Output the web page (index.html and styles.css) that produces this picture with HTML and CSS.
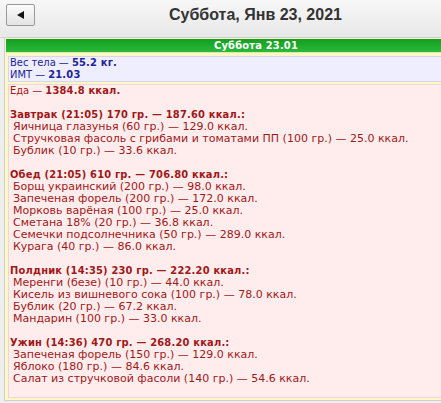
FILE: index.html
```html
<!DOCTYPE html>
<html>
<head>
<meta charset="utf-8">
<link rel="stylesheet" href="styles.css">
</head>
<body>
<div class="page">
  <div class="header">
    <button class="back"><span class="tri"></span></button>
    <h1 class="title">Суббота, Янв 23, 2021</h1>
  </div>
  <div class="box">
    <div class="dayhead">Суббота 23.01</div>
    <div class="weight">
      <div>Вес тела — <b>55.2 кг.</b></div>
      <div>ИМТ — <b>21.03</b></div>
    </div>
    <div class="food">
      <div class="total">Еда — <b>1384.8 ккал.</b></div>
      <div class="blank"></div>
      <div class="meal">Завтрак (21:05) 170 гр. — 187.60 ккал.:</div>
      <div class="item">Яичница глазунья (60 гр.) — 129.0 ккал.</div>
      <div class="item">Стручковая фасоль с грибами и томатами ПП (100 гр.) — 25.0 ккал.</div>
      <div class="item">Бублик (10 гр.) — 33.6 ккал.</div>
      <div class="blank"></div>
      <div class="meal">Обед (21:05) 610 гр. — 706.80 ккал.:</div>
      <div class="item">Борщ украинский (200 гр.) — 98.0 ккал.</div>
      <div class="item">Запеченая форель (200 гр.) — 172.0 ккал.</div>
      <div class="item">Морковь варёная (100 гр.) — 25.0 ккал.</div>
      <div class="item">Сметана 18% (20 гр.) — 36.8 ккал.</div>
      <div class="item">Семечки подсолнечника (50 гр.) — 289.0 ккал.</div>
      <div class="item">Курага (40 гр.) — 86.0 ккал.</div>
      <div class="blank"></div>
      <div class="meal">Полдник (14:35) 230 гр. — 222.20 ккал.:</div>
      <div class="item">Меренги (безе) (10 гр.) — 44.0 ккал.</div>
      <div class="item">Кисель из вишневого сока (100 гр.) — 78.0 ккал.</div>
      <div class="item">Бублик (20 гр.) — 67.2 ккал.</div>
      <div class="item">Мандарин (100 гр.) — 33.0 ккал.</div>
      <div class="blank"></div>
      <div class="meal">Ужин (14:36) 470 гр. — 268.20 ккал.:</div>
      <div class="item">Запеченая форель (150 гр.) — 129.0 ккал.</div>
      <div class="item">Яблоко (180 гр.) — 84.6 ккал.</div>
      <div class="item">Салат из стручковой фасоли (140 гр.) — 54.6 ккал.</div>
      <div class="blank"></div>
    </div>
  </div>
</div>
</body>
</html>
```

FILE: styles.css
```css
html, body {
  margin: 0;
  padding: 0;
  background: #efefef;
  overflow: hidden;
}
.page {
  width: 511px;
}
.header {
  width: 511px;
  height: 38px;
  box-sizing: border-box;
  padding: 4px 0 0 6px;
  display: grid;
  grid-template-columns: 29px 1fr 35px;
  align-items: start;
  background: linear-gradient(#f7f7f7, #e8e8e8);
  border-bottom: 1px solid #d0d0d0;
}
.back {
  width: 29px;
  height: 22px;
  padding: 0;
  margin: 0;
  border: 1px solid #9a9a9a;
  border-radius: 2px;
  background: linear-gradient(#fbfbfb, #e3e3e3);
  display: flex;
  align-items: center;
  justify-content: center;
}
.tri {
  width: 0;
  height: 0;
  border-top: 4px solid transparent;
  border-bottom: 4px solid transparent;
  border-right: 7px solid #111;
}
.title {
  margin: 0;
  padding-top: 1px;
  text-align: center;
  font-family: "Liberation Sans", Arial, sans-serif;
  font-weight: bold;
  font-size: 16px;
  line-height: 20px;
  color: #333;
}
.box {
  width: 503px;
  margin-left: 4px;
  box-sizing: border-box;
  border: 1px solid #cfcfcf;
  border-top: none;
  background: #fdf8c6;
  padding: 1px 0 2px 1px;
  font-family: "DejaVu Sans", sans-serif;
  font-size: 11px;
  line-height: 12px;
}
.dayhead {
  height: 13px;
  background: linear-gradient(#129f22, #2cb83a);
  color: #fff;
  font-family: "DejaVu Sans Condensed", "DejaVu Sans", sans-serif;
  font-weight: bold;
  letter-spacing: 0.2px;
  text-align: center;
  line-height: 13px;
  border-bottom: 1px solid #d6eca8;
}
b, .meal {
  font-family: "DejaVu Sans Condensed", "DejaVu Sans", sans-serif;
  font-weight: bold;
  letter-spacing: 0.2px;
}
.weight {
  margin: 3px 0 0 2px;
  background: #eeeeff;
  border: 1px solid #d6d6ee;
  padding: 0 0 0 1px;
  color: #222299;
  height: 24px;
  font-family: "DejaVu Sans Condensed", "DejaVu Sans", sans-serif;
}
.food {
  margin: 2px 0 0 2px;
  background: #ffeded;
  border: 1px solid #ecd6d6;
  padding: 0 0 0 1px;
  color: #a01818;
}
.total {
  font-family: "DejaVu Sans Condensed", "DejaVu Sans", sans-serif;
}
.blank {
  height: 12px;
}
.item {
  padding-left: 3px;
}
```
